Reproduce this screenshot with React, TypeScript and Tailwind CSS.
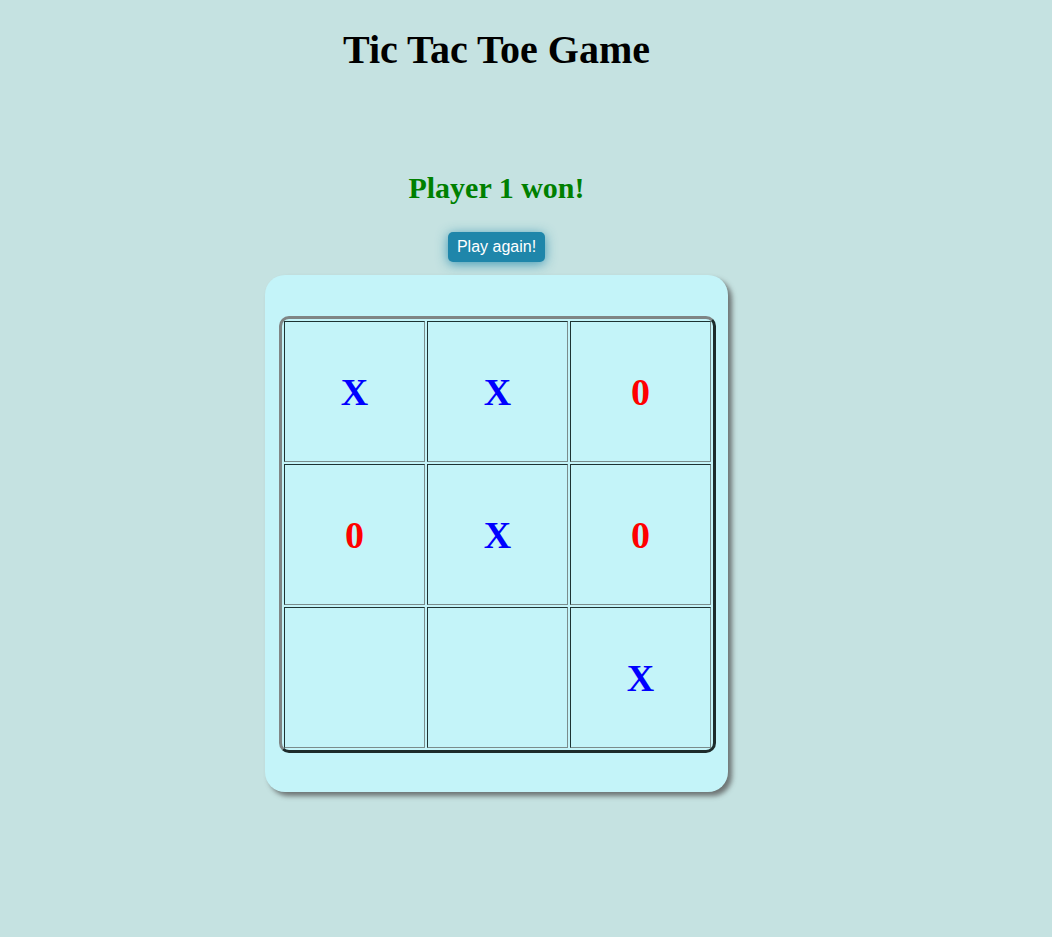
import React from "react";

const board: string[] = ["X", "X", "0", "0", "X", "0", "", "", "X"];

export default function App() {
  return (
    <div className="min-h-[937px] w-full bg-[#c5e2e1]" style={{ fontFamily: '"Liberation Serif", "Times New Roman", serif' }}>
      <div className="flex w-[993px] flex-col items-center">
        <h1 className="mt-[26px] text-[40px] font-bold leading-[48px] text-black">Tic Tac Toe Game</h1>
        <h2 className="mt-[96px] text-[30px] font-bold leading-[36px] text-[#008000]">Player 1 won!</h2>
        <button
          className="mt-[26px] h-[30px] rounded-[5px] bg-[#1f86aa] px-[9px] text-[16px] leading-[30px] text-white shadow-[0_2px_12px_rgba(31,134,170,0.8)]"
          style={{ fontFamily: '"Liberation Sans", Arial, sans-serif' }}
        >
          Play again!
        </button>
        <div className="mt-[13px] flex h-[517px] w-[463px] flex-col rounded-[20px] bg-[#c4f4f9] pl-[14px] pt-[41px] shadow-[4px_4px_5px_rgba(80,80,80,0.75)]">
          <div className="w-[437px] rounded-[10px] border-[3px] border-t-[#7f8585] border-l-[#7f8585] border-b-[#1d2b2b] border-r-[#1d2b2b] p-[2px]">
            <div className="grid grid-cols-[141px_141px_141px] gap-[2px]">
              {board.map((v, i) => (
                <div
                  key={i}
                  className="flex h-[141px] items-center justify-center border border-t-[#1d3333] border-l-[#1d3333] border-b-[#7a8c8c] border-r-[#7a8c8c]"
                >
                  <span className={`text-[38px] font-bold leading-none ${v === "X" ? "text-[#0000ff]" : "text-[#ff0000]"}`}>{v}</span>
                </div>
              ))}
            </div>
          </div>
        </div>
      </div>
    </div>
  );
}
